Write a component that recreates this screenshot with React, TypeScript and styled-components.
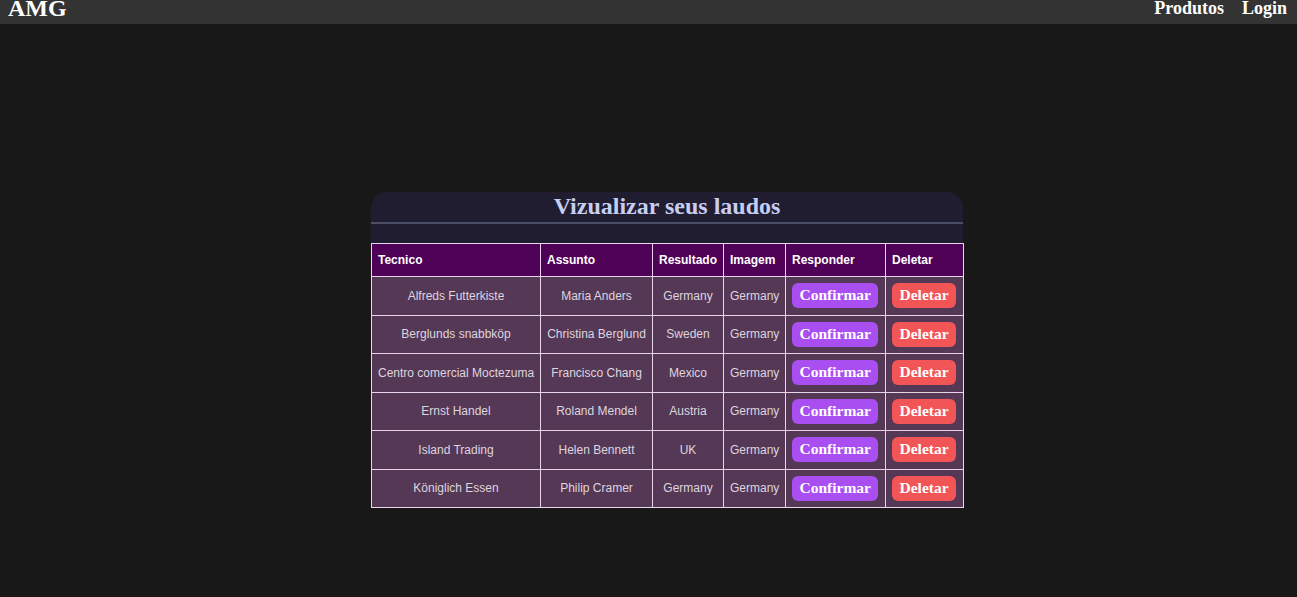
import React from "react";
import styled, { createGlobalStyle } from "styled-components";

const COLORS = {
  page: "#181818",
  nav: "#333333",
  card: "#211d31",
  rule: "#4b4e65",
  title: "#c6cef2",
  head: "#4f0157",
  row: "#553856",
  border: "#e6d6e8",
  cellText: "#ddd5df",
  confirm: "#a94ff2",
  remove: "#f25555",
  white: "#ffffff",
};

const GlobalStyle = createGlobalStyle`
  html, body {
    margin: 0;
    padding: 0;
    background: ${COLORS.page};
    height: 100%;
  }
  body {
    font-family: "Liberation Serif", "Times New Roman", serif;
  }
`;

const Page = styled.div`
  min-height: 597px;
  background: ${COLORS.page};
`;

const NavBar = styled.nav`
  height: 24px;
  background: ${COLORS.nav};
  display: flex;
  align-items: center;
  justify-content: space-between;
  padding: 0 10px 0 8px;
  color: ${COLORS.white};
`;

const Brand = styled.div`
  font-size: 24px;
  font-weight: 700;
  line-height: 24px;
  margin-top: -8px;
`;

const NavLinks = styled.div`
  display: flex;
  gap: 18px;
  margin-top: -8px;
`;

const NavLink = styled.a`
  font-size: 18px;
  font-weight: 700;
  color: ${COLORS.white};
  text-decoration: none;
`;

const Main = styled.main`
  padding: 168px 0 0 371px;
`;

const Card = styled.section`
  width: 592px;
  background: ${COLORS.card};
  border-radius: 16px 16px 0 0;
`;

const Title = styled.h2`
  margin: 0;
  padding-top: 1px;
  text-align: center;
  font-size: 24px;
  font-weight: 700;
  line-height: 26px;
  color: ${COLORS.title};
  border-bottom: 2px solid ${COLORS.rule};
  padding-bottom: 3px;
`;

const Spacer = styled.div`
  height: 19px;
`;

const Table = styled.table`
  width: 592px;
  table-layout: fixed;
  border-collapse: collapse;
  font-family: "Liberation Sans", Arial, sans-serif;
  font-size: 12px;
`;

const HeadCell = styled.th`
  background: ${COLORS.head};
  color: ${COLORS.white};
  text-align: left;
  font-weight: 700;
  padding: 0 6px;
  height: 32px;
  border: 1px solid ${COLORS.border};
  white-space: nowrap;
`;

const Cell = styled.td`
  background: ${COLORS.row};
  color: ${COLORS.cellText};
  text-align: center;
  padding: 0 6px;
  height: 37.5px;
  border: 1px solid ${COLORS.border};
  white-space: nowrap;
`;

const ActionCell = styled(Cell)`
  text-align: left;
`;

const ActionButton = styled.button<{ $tone: "confirm" | "remove" }>`
  font-family: "Liberation Serif", "Times New Roman", serif;
  font-size: 15.5px;
  font-weight: 700;
  color: ${COLORS.white};
  background: ${(p) => (p.$tone === "confirm" ? COLORS.confirm : COLORS.remove)};
  border: none;
  border-radius: 6px;
  padding: 3px 7.5px 4px;
  line-height: 18px;
  cursor: pointer;
`;

const columns = [
  { label: "Tecnico", width: 169 },
  { label: "Assunto", width: 112 },
  { label: "Resultado", width: 71 },
  { label: "Imagem", width: 62 },
  { label: "Responder", width: 100 },
  { label: "Deletar", width: 78 },
];

const laudos = [
  { tecnico: "Alfreds Futterkiste", assunto: "Maria Anders", resultado: "Germany", imagem: "Germany" },
  { tecnico: "Berglunds snabbköp", assunto: "Christina Berglund", resultado: "Sweden", imagem: "Germany" },
  { tecnico: "Centro comercial Moctezuma", assunto: "Francisco Chang", resultado: "Mexico", imagem: "Germany" },
  { tecnico: "Ernst Handel", assunto: "Roland Mendel", resultado: "Austria", imagem: "Germany" },
  { tecnico: "Island Trading", assunto: "Helen Bennett", resultado: "UK", imagem: "Germany" },
  { tecnico: "Königlich Essen", assunto: "Philip Cramer", resultado: "Germany", imagem: "Germany" },
];

export default function App() {
  return (
    <Page>
      <GlobalStyle />
      <NavBar>
        <Brand>AMG</Brand>
        <NavLinks>
          <NavLink href="#">Produtos</NavLink>
          <NavLink href="#">Login</NavLink>
        </NavLinks>
      </NavBar>
      <Main>
        <Card>
          <Title>Vizualizar seus laudos</Title>
          <Spacer />
          <Table>
            <colgroup>
              {columns.map((c) => (
                <col key={c.label} style={{ width: c.width }} />
              ))}
            </colgroup>
            <thead>
              <tr>
                {columns.map((c) => (
                  <HeadCell key={c.label}>{c.label}</HeadCell>
                ))}
              </tr>
            </thead>
            <tbody>
              {laudos.map((l) => (
                <tr key={l.tecnico}>
                  <Cell>{l.tecnico}</Cell>
                  <Cell>{l.assunto}</Cell>
                  <Cell>{l.resultado}</Cell>
                  <Cell>{l.imagem}</Cell>
                  <ActionCell>
                    <ActionButton $tone="confirm">Confirmar</ActionButton>
                  </ActionCell>
                  <ActionCell>
                    <ActionButton $tone="remove">Deletar</ActionButton>
                  </ActionCell>
                </tr>
              ))}
            </tbody>
          </Table>
        </Card>
      </Main>
    </Page>
  );
}
